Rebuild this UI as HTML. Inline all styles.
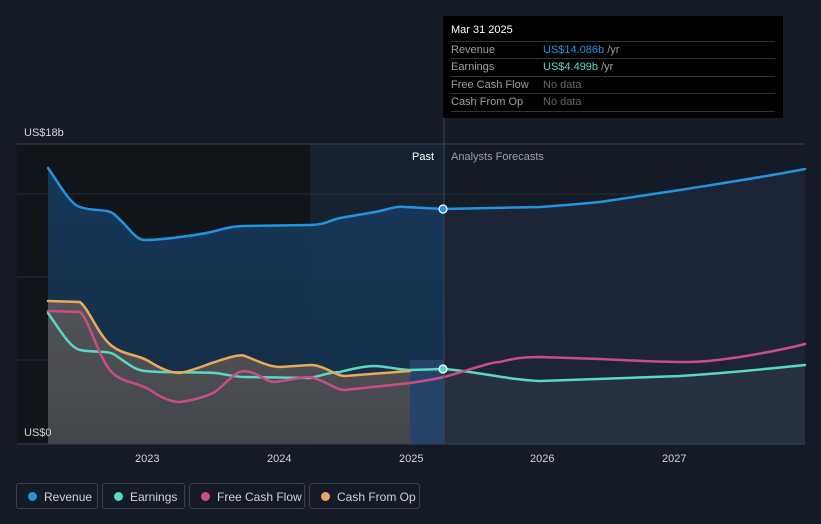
<!DOCTYPE html>
<html><head><style>
body{margin:0;background:#151b26;width:821px;height:524px;overflow:hidden;font-family:"Liberation Sans",sans-serif;position:relative}
.lg{position:absolute;top:483px;height:26px;border:1px solid #3a404b;border-radius:3px;color:#d0d3d8;font-size:12px;line-height:26px;box-sizing:border-box;padding-left:27px}
.lg i{position:absolute;left:11px;top:8px;width:9px;height:9px;border-radius:50%}
.tt{position:absolute;left:443px;top:16px;width:340px;height:102px;background:#000;font-size:11px;color:#9aa0a8}
.tt .r{position:absolute;left:8px;right:8px;height:17px;line-height:17px;border-top:1px solid #333}
.tt .r span{position:absolute;left:92px}
</style></head><body>
<svg width="821" height="524" style="position:absolute;left:0;top:0">
<defs>
<linearGradient id="gb" x1="0" y1="0" x2="0" y2="1"><stop offset="0" stop-color="#173a5e" stop-opacity=".95"/><stop offset="1" stop-color="#16314c" stop-opacity=".8"/></linearGradient>
<linearGradient id="gg" x1="0" y1="0" x2="0" y2="1"><stop offset="0" stop-color="#5e5a58"/><stop offset="1" stop-color="#4a4a4c"/></linearGradient>
</defs>
<rect x="17" y="144" width="293" height="300" fill="#111419"/>
<rect x="310" y="144" width="134" height="300" fill="#172230"/>
<line x1="17" y1="144" x2="805" y2="144" stroke="#3a404b"/>
<line x1="17" y1="194" x2="805" y2="194" stroke="#262c37"/>
<line x1="17" y1="277" x2="805" y2="277" stroke="#262c37"/>
<line x1="17" y1="360" x2="805" y2="360" stroke="#262c37"/>
<path d="M48,168 C60,185 70,204 80,207 C95,212 108,208 115,215 C130,228 135,240 145,240 C160,240 200,235 215,231 C230,227 235,226 245,226 L310,225 C325,225 330,220 340,218 L375,212 C390,209 395,206 405,207 L444,209 L444,444 L48,444Z" fill="url(#gb)"/>
<path d="M444,209 L540,207 C570,205 590,203 600,202 L680,190 C730,182 770,176 805,169 L805,444 L444,444Z" fill="#1b2535"/>
<path d="M48,301 L80,302 C90,310 100,340 115,348 C125,355 140,355 150,362 C160,368 170,373 180,373 C195,370 205,365 215,362 C230,357 240,354 245,356 C260,362 270,367 280,367 L310,365 C325,365 335,376 345,376 L410,371 L410,444 L48,444Z" fill="url(#gg)" opacity=".85"/>
<rect x="410" y="360" width="34" height="84" fill="#2a4a70" opacity=".8"/>
<path d="M444,369 C480,372 510,380 540,381 L680,376 C740,372 775,368 805,365 L805,444 L444,444Z" fill="#283140"/>
<g fill="none" stroke-width="2.5" stroke-linecap="round">
<path d="M48,168 C60,185 70,204 80,207 C95,212 108,208 115,215 C130,228 135,240 145,240 C160,240 200,235 215,231 C230,227 235,226 245,226 L310,225 C325,225 330,220 340,218 L375,212 C390,209 395,206 405,207 L444,209 L540,207 C570,205 590,203 600,202 L680,190 C730,182 770,176 805,169" stroke="#2394df"/>
<path d="M48,313 C60,330 70,348 80,350 C95,353 108,350 115,355 C130,365 135,370 145,371 C160,373 200,372 215,373 C230,375 235,377 245,377 L310,378 C325,375 330,372 340,372 C355,368 365,366 375,366 C390,367 400,370 410,370 L444,369 C480,372 510,380 540,381 L680,376 C740,372 775,368 805,365" stroke="#5ad8c3"/>
<path d="M48,311 L80,312 C90,320 100,365 115,375 C125,383 140,383 150,390 C160,397 170,402 180,402 C195,400 205,397 215,392 C230,380 235,371 245,371 C260,373 265,382 275,382 C290,380 300,377 310,377 C325,380 335,390 345,390 L410,383 C425,381 435,379 444,377 C470,370 490,362 500,362 C515,358 525,357 540,357 L600,359 C640,361 660,362 680,362 C710,362 725,359 740,357 C770,352 790,348 805,344" stroke="#c84e87"/>
<path d="M48,301 L80,302 C90,310 100,340 115,348 C125,355 140,355 150,362 C160,368 170,373 180,373 C195,370 205,365 215,362 C230,357 240,354 245,356 C260,362 270,367 280,367 L310,365 C325,365 335,376 345,376 L410,371" stroke="#e8a95a"/>
</g>
<line x1="444" y1="16" x2="444" y2="444" stroke="#3a4556"/>
<circle cx="443" cy="209" r="4" fill="#2394df" stroke="#fff" stroke-width="1.2"/>
<circle cx="443" cy="369" r="4" fill="#5ad8c3" stroke="#fff" stroke-width="1.2"/>
<line x1="17" y1="444" x2="805" y2="444" stroke="#3a404b"/>
<g font-size="11" fill="#d0d3d8" font-family="Liberation Sans,sans-serif">
<text x="24" y="136">US$18b</text>
<text x="24" y="436">US$0</text>
<text x="412" y="160" fill="#fff">Past</text>
<text x="451" y="160" fill="#9aa0a8">Analysts Forecasts</text>
<text x="135" y="462">2023</text>
<text x="267" y="462">2024</text>
<text x="399" y="462">2025</text>
<text x="530" y="462">2026</text>
<text x="662" y="462">2027</text>
</g>
</svg>
<div class="tt">
<div style="position:absolute;left:8px;top:8px;color:#fff;font-size:11px">Mar 31 2025</div>
<div class="r" style="top:25px">Revenue<span><b style="font-weight:normal;color:#2394df">US$14.086b</b> /yr</span></div>
<div class="r" style="top:42px">Earnings<span><b style="font-weight:normal;color:#5ad8c3">US$4.499b</b> /yr</span></div>
<div class="r" style="top:60px">Free Cash Flow<span style="color:#666">No data</span></div>
<div class="r" style="top:77px">Cash From Op<span style="color:#666">No data</span></div>
<div style="position:absolute;left:8px;right:8px;top:95px;border-top:1px solid #333"></div>
</div>
<div class="lg" style="left:16px;width:82px"><i style="background:#2394df"></i>Revenue</div>
<div class="lg" style="left:102px;width:83px"><i style="background:#5ad8c3"></i>Earnings</div>
<div class="lg" style="left:189px;width:116px"><i style="background:#c84e87"></i>Free Cash Flow</div>
<div class="lg" style="left:309px;width:111px"><i style="background:#e8a95a"></i>Cash From Op</div>
</body></html>
